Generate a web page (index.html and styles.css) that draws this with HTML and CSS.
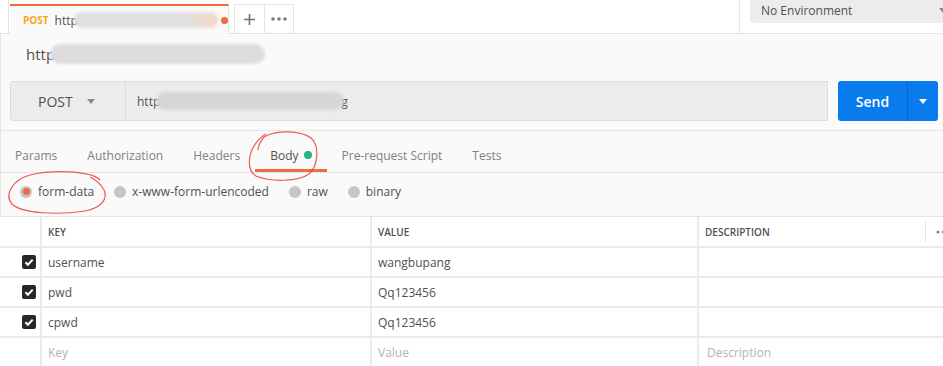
FILE: index.html
```html
<!DOCTYPE html>
<html lang="en">
<head>
    <meta charset="UTF-8">
    <title>Postman</title>
    <link rel="stylesheet" href="styles.css">
</head>
<body>
    <div class="tabbar">
        <div class="tab-strip">
            <div class="tab active">
                <span class="tab-method">POST</span>
                <span class="tab-name">http</span>
                <span class="blur blur-tab"></span>
                <span class="unsaved"></span>
            </div>
            <div class="tab-btn first">
                <svg width="13" height="13" viewBox="0 0 13 13"><path d="M6.5 1v11M1 6.5h11" stroke="#6f6f6f" stroke-width="1.6"/></svg>
            </div>
            <div class="tab-btn">
                <svg width="18" height="6" viewBox="0 0 18 6"><circle cx="3" cy="3" r="1.8" fill="#7a7a7a"/><circle cx="9" cy="3" r="1.8" fill="#7a7a7a"/><circle cx="15" cy="3" r="1.8" fill="#7a7a7a"/></svg>
            </div>
        </div>
        <div class="env-area">
            <div class="env-select">
                <span>No Environment</span>
                <span class="caret"></span>
            </div>
        </div>
    </div>

    <div class="panel">
        <div class="title">
            <span>http</span>
            <span class="blur blur-title"></span>
        </div>

        <div class="urlbar">
            <div class="method">
                <span>POST</span>
                <span class="caret"></span>
            </div>
            <div class="url">
                <span>http</span>
                <span class="blur blur-url"></span>
                <span class="url-end">g</span>
            </div>
            <div class="send">
                <div class="send-main">Send</div>
                <div class="send-drop"><span class="caret white"></span></div>
            </div>
        </div>

        <div class="req-tabs">
            <div class="req-tab">Params</div>
            <div class="req-tab">Authorization</div>
            <div class="req-tab">Headers</div>
            <div class="req-tab active">Body <span class="dot"></span></div>
            <div class="req-tab">Pre-request Script</div>
            <div class="req-tab">Tests</div>
        </div>

        <div class="body-types">
            <label class="radio-item"><span class="radio checked"></span>form-data</label>
            <label class="radio-item"><span class="radio"></span>x-www-form-urlencoded</label>
            <label class="radio-item"><span class="radio"></span>raw</label>
            <label class="radio-item"><span class="radio"></span>binary</label>
        </div>

        <div class="kv-table">
            <div class="kv-row head">
                <div class="cell check-cell"></div>
                <div class="cell">KEY</div>
                <div class="cell">VALUE</div>
                <div class="cell desc-head">
                    <span>DESCRIPTION</span>
                    <span class="head-more">
                        <svg width="14" height="6" viewBox="0 0 14 6"><circle cx="2" cy="3" r="1.6" fill="#8a8a8a"/><circle cx="7.5" cy="3" r="1.6" fill="#8a8a8a"/><circle cx="13" cy="3" r="1.6" fill="#8a8a8a"/></svg>
                    </span>
                </div>
            </div>
            <div class="kv-row">
                <div class="cell check-cell"><span class="checkbox"><svg width="14" height="14" viewBox="0 0 14 14"><path d="M3.4 7.2l2.5 2.5 4.8-5.1" stroke="#fff" stroke-width="2" fill="none"/></svg></span></div>
                <div class="cell">username</div>
                <div class="cell">wangbupang</div>
                <div class="cell"></div>
            </div>
            <div class="kv-row">
                <div class="cell check-cell"><span class="checkbox"><svg width="14" height="14" viewBox="0 0 14 14"><path d="M3.4 7.2l2.5 2.5 4.8-5.1" stroke="#fff" stroke-width="2" fill="none"/></svg></span></div>
                <div class="cell">pwd</div>
                <div class="cell">Qq123456</div>
                <div class="cell"></div>
            </div>
            <div class="kv-row">
                <div class="cell check-cell"><span class="checkbox"><svg width="14" height="14" viewBox="0 0 14 14"><path d="M3.4 7.2l2.5 2.5 4.8-5.1" stroke="#fff" stroke-width="2" fill="none"/></svg></span></div>
                <div class="cell">cpwd</div>
                <div class="cell">Qq123456</div>
                <div class="cell"></div>
            </div>
            <div class="kv-row">
                <div class="cell check-cell"></div>
                <div class="cell placeholder">Key</div>
                <div class="cell placeholder">Value</div>
                <div class="cell placeholder desc">Description</div>
            </div>
        </div>
    </div>

    <!-- hand-drawn red marks on the screenshot -->
    <svg class="marks" width="943" height="366" viewBox="0 0 943 366">
        <path d="M258 150 C258 144 262 140 264 137 C276 130 300 130 311 138 C320 146 318 166 309 174 C298 182 270 182 256 176 C247 171 248 156 254 146 C257 141 261 137 266 134" />
        <path d="M100 180 C90 170 50 170 30 175 C12 180 4 195 12 204 C22 214 60 215 85 211 C102 208 108 198 104 190 C101 184 96 180 90 177" />
    </svg>
</body>
</html>
```

FILE: styles.css
```css
body {
    margin: 0;
    width: 943px;
    height: 366px;
    overflow: hidden;
    position: relative;
    font-family: "Open Sans", "Liberation Sans", sans-serif;
    color: #505050;
    background-color: #fafafa;
}
.tabbar {
    display: flex;
    height: 34px;
    box-sizing: border-box;
    background-color: #fff;
    border-bottom: 1px solid #e3e3e3;
}
.tab-strip {
    display: flex;
    align-items: flex-end;
    margin-left: 8px;
    padding-left: 1px;
    border-left: 1px solid #e3e3e3;
}
.tab {
    display: flex;
    align-items: center;
    box-sizing: border-box;
    width: 219px;
    height: 30px;
    margin-bottom: -1px;
    padding-left: 13px;
    background-color: #fafafa;
    border-top: 2px solid #f26b3a;
    border-right: 1px solid #e3e3e3;
    position: relative;
    z-index: 1;
}
.tab-method {
    font-size: 10px;
    font-weight: 700;
    color: #f5a623;
}
.tab-name {
    font-size: 12px;
    margin-left: 6px;
}
.blur {
    display: inline-block;
    border-radius: 10px;
    filter: blur(1.5px);
    background-color: #dcdcdc;
}
.blur-tab {
    width: 145px;
    height: 16px;
    margin-left: -4px;
    background: linear-gradient(90deg, #e0e0e0 75%, #f5d8ca);
}
.unsaved {
    width: 7px;
    height: 7px;
    border-radius: 50%;
    background-color: #f26b3a;
    margin-left: 3px;
}
.tab-btn {
    display: flex;
    align-items: center;
    justify-content: center;
    box-sizing: border-box;
    width: 29px;
    height: 29px;
    border: 1px solid #e3e3e3;
    border-bottom: none;
    border-left: none;
    background-color: #fff;
}
.tab-btn.first {
    width: 31px;
    margin-left: 5px;
    border-left: 1px solid #e3e3e3;
}
.env-area {
    margin-left: auto;
    width: 204px;
    box-sizing: border-box;
    padding-left: 10px;
    border-left: 1px solid #e8e8e8;
}
.env-select {
    display: flex;
    align-items: center;
    justify-content: space-between;
    height: 20px;
    padding: 0 0 3px 11px;
    font-size: 12px;
    background-color: #ececec;
    border-radius: 0 0 0 4px;
}
.env-select .caret {
    margin-right: -4px;
}
.caret {
    width: 0;
    height: 0;
    border-left: 4px solid transparent;
    border-right: 4px solid transparent;
    border-top: 5px solid #8a8a8a;
}
.caret.white {
    border-top-color: #fff;
}
.panel {
    box-shadow: inset 1px 0 0 #e6e6e6;
}
.title {
    display: flex;
    align-items: center;
    height: 40px;
    padding-left: 26px;
    font-size: 15px;
}
.blur-title {
    width: 215px;
    height: 20px;
    margin-left: -5px;
}
.urlbar {
    display: flex;
    height: 40px;
    margin-top: 7px;
    padding: 0 5px 0 10px;
}
.method {
    display: flex;
    align-items: center;
    box-sizing: border-box;
    width: 116px;
    padding-left: 27px;
    font-size: 14px;
    background-color: #ececec;
    border: 1px solid #dcdcdc;
    border-radius: 3px 0 0 3px;
}
.method .caret {
    margin-left: 14px;
}
.url {
    flex: 1;
    display: flex;
    align-items: center;
    padding-left: 11px;
    font-size: 12px;
    background-color: #ececec;
    border: 1px solid #dcdcdc;
    border-left: none;
}
.blur-url {
    width: 188px;
    height: 18px;
    margin-left: -4px;
    background-color: #d6d6d6;
}
.url-end {
    margin-left: -3px;
}
.send {
    display: flex;
    width: 100px;
    margin-left: 10px;
    border-radius: 3px;
    background-color: #097bed;
    color: #fff;
}
.send-main {
    display: flex;
    align-items: center;
    justify-content: center;
    width: 69px;
    font-size: 14px;
    font-weight: 600;
}
.send-drop {
    flex: 1;
    display: flex;
    align-items: center;
    justify-content: center;
    border-left: 1px solid #0868cf;
}
.req-tabs {
    display: flex;
    margin-top: 9px;
    border-top: 1px solid #e6e6e6;
    border-bottom: 1px solid #e3e3e3;
}
.req-tab {
    display: flex;
    align-items: center;
    box-sizing: border-box;
    height: 41px;
    padding: 10px 15px 0;
    font-size: 12px;
    color: #808080;
    border-bottom: 3px solid transparent;
}
.req-tab.active {
    color: #505050;
    border-bottom-color: #f26b3a;
}
.dot {
    width: 8px;
    height: 8px;
    margin-left: 5px;
    border-radius: 50%;
    background-color: #26b47f;
}
.body-types {
    display: flex;
    align-items: center;
    height: 37px;
    padding-left: 20px;
    gap: 20px;
    font-size: 12px;
}
.radio-item {
    display: flex;
    align-items: center;
}
.radio {
    display: flex;
    align-items: center;
    justify-content: center;
    width: 12px;
    height: 12px;
    margin-right: 6px;
    border-radius: 50%;
    background-color: #c6c6c6;
}
.radio.checked::after {
    content: "";
    width: 7px;
    height: 7px;
    border-radius: 50%;
    background-color: #f26b3a;
}
.kv-table {
    margin-top: 6px;
    border-top: 1px solid #e6e6e6;
    background-color: #fff;
}
.kv-row {
    display: grid;
    grid-template-columns: 40px 330px 327px 1fr;
    height: 30px;
    box-sizing: border-box;
    border-bottom: 2px solid #ebebeb;
    font-size: 12px;
}
.kv-row.head {
    height: 31px;
    font-size: 10px;
    font-weight: 600;
}
.cell {
    display: flex;
    align-items: center;
    padding-left: 6px;
    border-left: 2px solid #ebebeb;
}
.cell.check-cell {
    border-left: none;
    padding: 0 4px 0 0;
    justify-content: flex-end;
}
.cell.desc {
    padding-left: 8px;
}
.desc-head {
    justify-content: space-between;
    overflow: hidden;
}
.head-more {
    display: flex;
    align-items: center;
    height: 21px;
    padding-left: 10px;
    margin-right: -7px;
    border-left: 1px solid #e3e3e3;
}
.checkbox {
    display: flex;
    width: 14px;
    height: 14px;
    border-radius: 2px;
    background-color: #282828;
}
.placeholder {
    color: #b3b3b3;
}
.marks {
    position: absolute;
    top: 0;
    left: 0;
    pointer-events: none;
}
.marks path {
    fill: none;
    stroke: #ee3b3b;
    stroke-width: 1.2;
    opacity: 0.85;
}
```
